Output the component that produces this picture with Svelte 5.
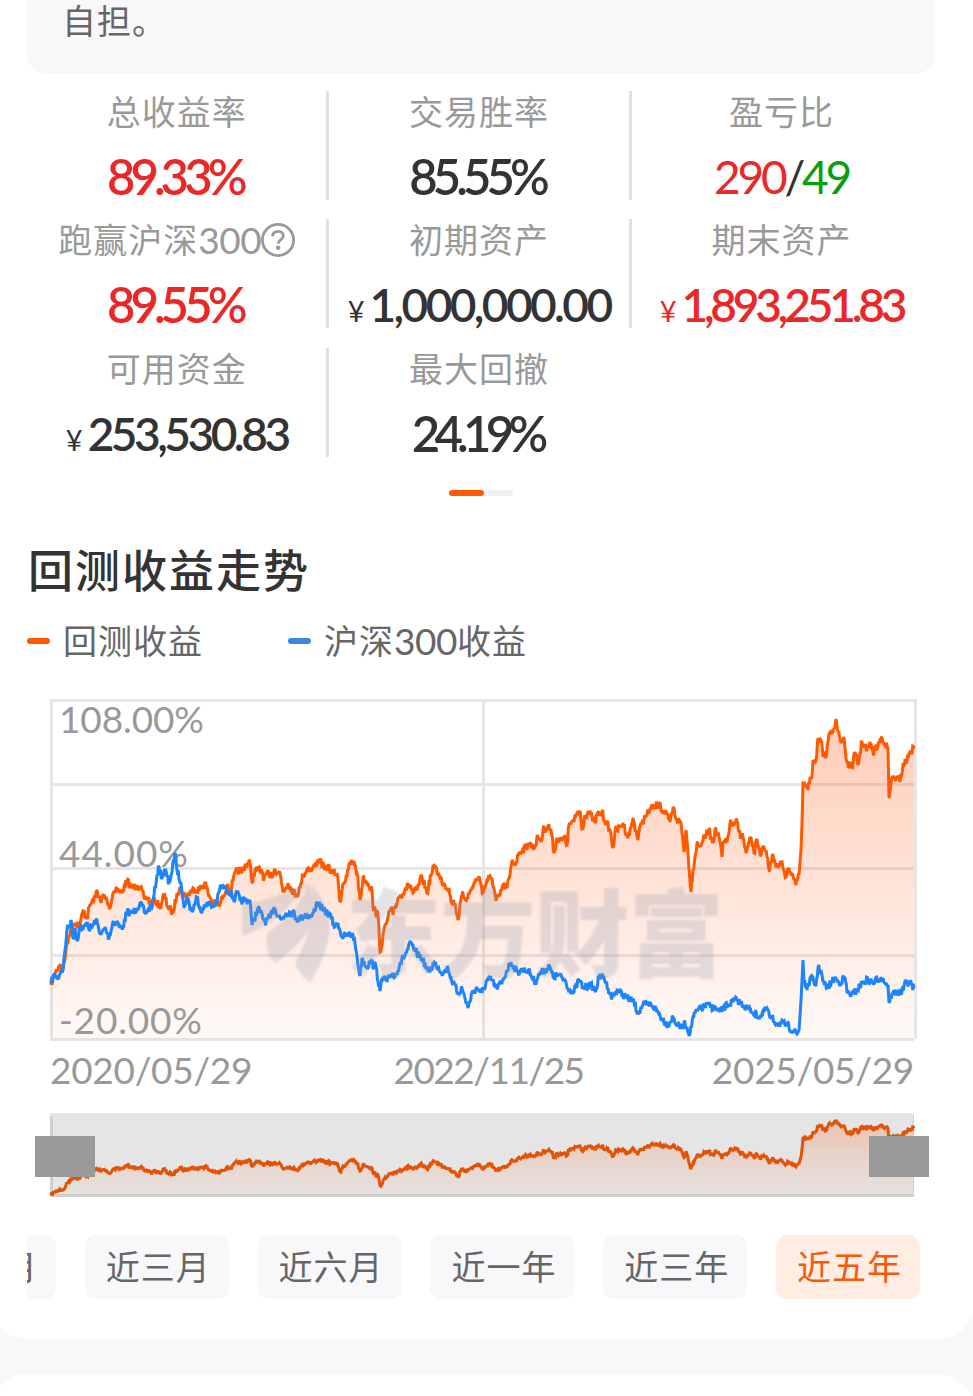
<script>
  const stats = [
    { label: '总收益率', value: '89.33%', tone: 'up', kind: 'percent' },
    { label: '交易胜率', value: '85.55%', kind: 'percent' },
    { label: '盈亏比', win: 290, lose: 49, kind: 'ratio' },
    { label: '跑赢沪深', num: '300', help: true, value: '89.55%', tone: 'up', kind: 'percent' },
    { label: '初期资产', value: '1,000,000.00', kind: 'money wide' },
    { label: '期末资产', value: '1,893,251.83', tone: 'up', kind: 'money narrow' },
    { label: '可用资金', value: '253,530.83', kind: 'money' },
    { label: '最大回撤', value: '24.19%', kind: 'percent tight' },
  ];

  const ranges = ['近一月', '近三月', '近六月', '近一年', '近三年', '近五年'];
  let activeRange = $state('近五年');

  // x y pairs in chart space
  const strategy = parse(`51 985 55 973 60 964 63 970 66 950 69 935 73 924 76 923 80 925 83 911 87 918 90 905
    95 898 97 890 101 903 103 895 107 900 110 908 113 893 116 888 120 893 123 890 127 881 132 888 137 885
    140 887 144 898 148 898 152 907 155 900 160 907 164 895 168 907 173 913 177 893 180 887 185 897 190 892
    195 889 200 889 205 883 208 893 213 903 220 905 223 895 227 887 230 890 233 881 237 870 242 872 245 865
    250 863 252 882 255 870 262 871 264 879 267 873 270 878 275 869 280 873 283 892 288 883 292 890 296 895
    300 888 303 875 308 868 312 870 319 859 325 870 328 866 332 873 337 873 340 902 343 883 347 877 349 865
    354 861 357 873 360 900 363 878 368 883 372 890 373 908 378 915 380 952 383 935 386 925 388 917 391 908
    393 915 398 898 403 893 405 889 410 885 413 893 417 890 422 877 427 893 431 875 435 865 440 878 445 885
    449 888 451 902 455 903 458 920 462 895 467 898 472 888 477 878 480 880 483 893 487 880 492 878 496 901
    500 895 503 885 507 888 510 875 512 860 516 863 519 852 525 848 529 843 534 848 538 837 542 840 543 830
    548 826 551 830 554 853 557 838 562 841 564 837 567 845 569 825 572 822 574 822 577 813 580 811 582 829
    585 815 588 812 592 817 595 823 597 815 602 812 606 823 610 830 613 848 615 832 620 827 623 823 628 837
    631 828 633 818 638 840 641 823 647 815 650 809 655 807 660 802 662 812 665 813 670 822 673 808 677 820
    681 823 684 852 686 830 688 853 691 892 693 870 697 843 699 847 703 840 709 830 713 842 715 830 719 837
    722 857 723 843 727 842 730 823 734 826 737 821 739 832 743 837 746 853 751 838 754 853 757 840 761 855
    763 847 767 857 769 870 773 855 778 868 782 862 786 877 789 868 793 875 796 885 799 875 801 850 802 823
    803 783 808 790 810 778 812 776 813 760 816 760 818 738 821 741 823 757 826 757 828 742 831 730 834 728
    836 719 838 732 841 743 844 737 846 758 849 767 852 767 855 753 858 765 862 742 867 750 871 743 873 753
    878 745 882 737 885 743 888 750 889 798 892 778 897 778 900 782 903 765 907 760 910 752 914 749`);

  const index300 = parse(`51 983 54 975 58 978 61 970 63 970 65 950 67 930 71 920 73 938 75 928 77 940 80 927
    83 930 87 922 90 930 96 920 101 935 105 928 109 938 113 922 118 923 120 928 123 927 127 912 132 913
    137 908 140 903 145 913 152 906 154 895 157 875 159 867 162 878 165 870 169 883 172 872 175 853 177 870
    181 882 184 908 187 897 192 912 197 897 202 912 207 902 213 907 217 902 220 887 225 888 230 892 235 900
    237 892 240 901 250 900 252 925 258 908 265 922 270 918 274 907 281 920 286 913 293 912 298 920 305 915
    312 917 317 902 323 910 330 915 335 927 338 923 342 937 348 935 353 935 355 943 357 957 360 976 362 958
    367 967 370 962 376 967 380 991 383 977 387 982 392 973 395 977 400 963 405 955 411 943 415 952 422 958
    428 972 435 963 443 973 448 968 453 983 458 993 462 988 468 1008 472 993 477 988 482 993 487 980
    492 980 496 988 502 983 507 970 511 962 517 972 522 970 528 970 535 982 540 973 550 967 553 977 558 975
    565 980 568 988 574 992 579 980 583 988 590 985 596 990 599 977 604 977 608 988 612 998 617 990 627 998
    634 1002 638 1013 643 1005 652 1005 658 1012 663 1020 668 1025 673 1017 677 1025 682 1028 685 1023
    690 1034 693 1017 698 1010 707 1005 715 1008 720 1012 727 1005 737 1000 743 1005 750 1010 760 1017
    767 1008 770 1018 777 1023 787 1025 797 1034 799 1030 801 1000 803 960 804 980 807 990 810 978 816 985
    818 968 821 970 823 982 827 988 835 978 839 983 845 977 847 992 852 995 857 990 862 983 868 980 873 983
    881 977 888 985 889 1003 892 993 902 992 906 982 910 983 914 988`);

  function parse(text) {
    const n = text.trim().split(/\s+/).map(Number);
    const out = [];
    for (let i = 0; i < n.length; i += 2) out.push([n[i], n[i + 1]]);
    return out;
  }

  // fills in the daily wobble between two recorded points
  function daily(points, amp) {
    const out = [];
    let seed = 7;
    for (let i = 0; i < points.length - 1; i++) {
      const [x0, y0] = points[i];
      const [x1, y1] = points[i + 1];
      const steps = Math.max(1, Math.round((x1 - x0) * 1.4));
      out.push([x0, y0]);
      for (let s = 1; s < steps; s++) {
        seed = (seed * 16807) % 2147483647;
        const t = s / steps;
        const wobble = (seed / 2147483647 - 0.5) * 2 * amp;
        out.push([x0 + (x1 - x0) * t, y0 + (y1 - y0) * t + wobble]);
      }
    }
    out.push(points[points.length - 1]);
    return out;
  }

  const toPath = (points) => 'M' + points.map(([x, y]) => `${x.toFixed(1)} ${y.toFixed(1)}`).join('L');

  const strategyPath = toPath(daily(strategy, 4.2));
  const indexPath = toPath(daily(index300, 4));
  const miniPath = toPath(daily(strategy.map(([x, y]) => [x, 1195 - (985 - y) * 0.282]), 2));
</script>

<main class="page">
  <section class="card">
    <div class="notice">自担。</div>

    <div class="stats">
      {#each stats as stat}
        <div class="stat">
          <div class="stat-label">
            {stat.label}{#if stat.num}<span class="num">{stat.num}</span>{/if}
            {#if stat.help}
              <svg class="help" viewBox="0 0 34 34">
                <circle cx="17" cy="17" r="15.6" />
                <path d="M11.7 13.2c0-3 2.2-4.9 5.4-4.9s5.3 1.9 5.3 4.5c0 3.7-5.2 4-5.2 8" />
                <circle class="dot" cx="17.1" cy="24.8" r="2.2" />
              </svg>
            {/if}
          </div>
          <div class="stat-value {stat.kind} {stat.tone ?? ''}">
            {#if stat.kind === 'ratio'}
              <span class="up">{stat.win}</span>/<span class="down">{stat.lose}</span>
            {:else}
              {#if stat.kind.startsWith('money')}<span class="yen">¥</span>{/if}{stat.value}
            {/if}
          </div>
        </div>
      {/each}
    </div>

    <div class="pager"><span></span></div>

    <h2>回测收益走势</h2>

    <div class="legend">
      <div class="legend-item"><i class="mark orange"></i>回测收益</div>
      <div class="legend-item"><i class="mark blue"></i>沪深<span class="num">300</span>收益</div>
    </div>

    <svg class="chart" viewBox="27 695 908 348" width="908" height="348">
      <defs>
        <linearGradient id="area" gradientUnits="userSpaceOnUse" x1="0" y1="719" x2="0" y2="1041">
          <stop offset="0" stop-color="#ff5a14" stop-opacity="0.31" />
          <stop offset="1" stop-color="#ff5a14" stop-opacity="0.03" />
        </linearGradient>
        <filter id="soft"><feGaussianBlur stdDeviation="0.9" /></filter>
      </defs>
      <g class="grid">
        <path d="M50 700.5H917M53 784.5H914M53 868.5H914M53 955.5H914M50 1039.5H914" />
        <path d="M51.5 699V1041M483.5 702V1038M915.5 699V1039" />
      </g>
      <path d="{strategyPath}L914 1040L51 1040Z" fill="url(#area)" />
      <g class="y-label">
        <text x="59" y="733" textLength="145">108.00%</text>
        <text x="59" y="867" textLength="129">44.00%</text>
        <text x="59" y="1034" textLength="143">-20.00%</text>
      </g>
      <path class="line" d={strategyPath} stroke="#ff5a00" />
      <path class="line" d={indexPath} stroke="#1c84ff" />
      <g class="watermark" filter="url(#soft)">
        <path d="M308 883Q278 899 242 904V936Q278 926 308 883Z" />
        <path d="M308 883Q300 913 268 932C264 946 268 956 275 963Q306 943 316 914Q316 895 308 883Z" />
        <path d="M311 884Q326 900 330 920Q330 952 310 983Q300 976 295 963Q310 935 313 913Q315 896 311 884Z" />
        <text x="346" y="970" textLength="378">东方财富</text>
      </g>
    </svg>

    <div class="dates">
      <span>2020/05/29</span>
      <span class="middle">2022/11/25</span>
      <span>2025/05/29</span>
    </div>

    <svg class="slider" viewBox="27 1110 908 90" width="908" height="90">
      <defs>
        <linearGradient id="miniArea" gradientUnits="userSpaceOnUse" x1="0" y1="1118" x2="0" y2="1196">
          <stop offset="0" stop-color="#ff5a14" stop-opacity="0.26" />
          <stop offset="1" stop-color="#ff5a14" stop-opacity="0.01" />
        </linearGradient>
      </defs>
      <rect x="50" y="1113" width="864" height="84" fill="#e5e5e5" />
      <path d="M51.5 1116V1197M50 1195.5H914M913.5 1116V1197" />
      <path d="{miniPath}L914 1195L51 1195Z" fill="url(#miniArea)" />
      <path d="M51.5 1116V1194M50 1195.5H914" stroke="#cfcfcf" stroke-width="3" fill="none" />
      <path d="M913.5 1116V1197" stroke="#cfcfcf" />
      <path class="line" d={miniPath} stroke="#e35205" />
      <rect x="35" y="1136" width="60" height="41" fill="#999" />
      <rect x="869" y="1136" width="60" height="41" fill="#999" />
    </svg>

    <div class="ranges">
      {#each ranges as range}
        <button class:active={activeRange === range} onclick={() => (activeRange = range)}>{range}</button>
      {/each}
    </div>
  </section>

  <section class="card next"></section>
</main>

<style>
  :global(body) {
    background: #f6f8fa;
    overflow: hidden;
  }
  .page {
    width: 973px;
    height: 1396px;
    overflow: hidden;
    font-family: Lato, "Noto Sans CJK SC", sans-serif;
    color: #333;
  }
  .card {
    box-sizing: border-box;
    width: 983px;
    height: 1339px;
    margin-left: -9px;
    padding: 0 39px 0 36px;
    background: #fff;
    border-radius: 0 0 36px 36px;
    display: flex;
    flex-direction: column;
  }
  .card.next {
    height: 80px;
    margin-top: 35px;
    border-radius: 36px 36px 0 0;
  }
  .notice {
    box-sizing: border-box;
    height: 73px;
    padding-left: 35px;
    background: #f8f8fa;
    border-radius: 0 0 18px 18px;
    font-size: 34px;
    line-height: 42px;
    letter-spacing: 1px;
    color: #666;
  }
  .num {
    font-size: 37px;
    letter-spacing: -0.5px;
  }
  .stats {
    display: grid;
    grid-template-columns: repeat(3, 302.4px);
    grid-auto-rows: 109px;
    row-gap: 19.3px;
    margin-top: 18px;
  }
  .stat {
    display: flex;
    flex-direction: column;
    align-items: center;
    border-right: 3px solid #e0e0e0;
  }
  .stat:nth-child(3n), .stat:last-child { border-right-color: transparent; }
  .stat-label {
    display: flex;
    align-items: center;
    height: 42px;
    font-size: 34px;
    line-height: 42px;
    letter-spacing: 1px;
    color: #999;
  }
  .help {
    width: 34px;
    height: 34px;
    fill: none;
    stroke: #999;
    stroke-width: 2.8;
  }
  .help .dot { fill: #999; stroke: none; }
  .stat-value {
    height: 64px;
    margin-top: 12px;
    font-size: 46px;
    line-height: 64px;
    letter-spacing: -3.5px;
    font-weight: 600;
    white-space: nowrap;
  }
  .percent {
    margin: 11px 4px 0 0;
    font-size: 49px;
    letter-spacing: -4.9px;
  }
  .tight { letter-spacing: -5.7px; }
  .ratio { font-weight: 400; letter-spacing: -3.2px; }
  .wide { letter-spacing: -2.6px; }
  .narrow { letter-spacing: -4.2px; }
  .yen {
    margin-right: 5px;
    font-size: 29px;
    font-weight: 400;
    letter-spacing: 0;
  }
  .up { color: #eb2828; }
  .down { color: #0a9f0a; }
  .pager {
    align-self: center;
    width: 64px;
    height: 6px;
    margin-top: 33.4px;
    border-radius: 3px;
    background: #edf1f6;
  }
  .pager span {
    display: block;
    width: 35px;
    height: 6px;
    border-radius: 3px;
    background: #ff5a00;
  }
  h2 {
    margin: 45px 0 0 1px;
    font-size: 45px;
    line-height: 60px;
    letter-spacing: 2px;
    font-weight: 500;
  }
  .legend {
    display: flex;
    gap: 85px;
    height: 50px;
    margin-top: 15px;
  }
  .legend-item {
    display: flex;
    align-items: center;
    font-size: 34px;
    line-height: 50px;
    letter-spacing: 1px;
    color: #666;
  }
  .mark {
    width: 23px;
    height: 6px;
    margin-right: 13px;
    border-radius: 3px;
  }
  .orange { background: #ff5a00; }
  .blue { background: #3a86e0; }
  .chart { margin-top: 29px; flex-shrink: 0; }
  .grid { stroke: #e6e6e6; stroke-width: 3; fill: none; }
  .y-label { font-size: 37px; fill: #999; }
  .line { fill: none; stroke-width: 3; stroke-linejoin: miter; stroke-miterlimit: 2; }
  .watermark {
    fill: #8f98ad;
    opacity: 0.25;
    font-size: 95px;
    font-weight: 900;
  }
  .dates {
    display: flex;
    justify-content: space-between;
    height: 50px;
    margin: 2px 21px 0 23px;
    font-size: 37px;
    line-height: 50px;
    letter-spacing: -0.3px;
    color: #999;
  }
  .middle { margin-left: 13px; letter-spacing: -1.5px; }
  .slider { margin-top: 15px; flex-shrink: 0; }
  .ranges {
    display: flex;
    gap: 28.8px;
    margin-top: 35px;
    overflow: hidden;
  }
  .ranges button {
    flex: 0 0 144px;
    height: 64px;
    padding: 0 0 0 3px;
    border: none;
    border-radius: 11px;
    background: #f8f8fa;
    color: #666;
    font: 34px/64px Lato, "Noto Sans CJK SC", sans-serif;
    letter-spacing: 1px;
  }
  .ranges button:first-child { margin-left: -115px; }
  .ranges button.active { background: #ffede4; color: #f55a0a; }
</style>
